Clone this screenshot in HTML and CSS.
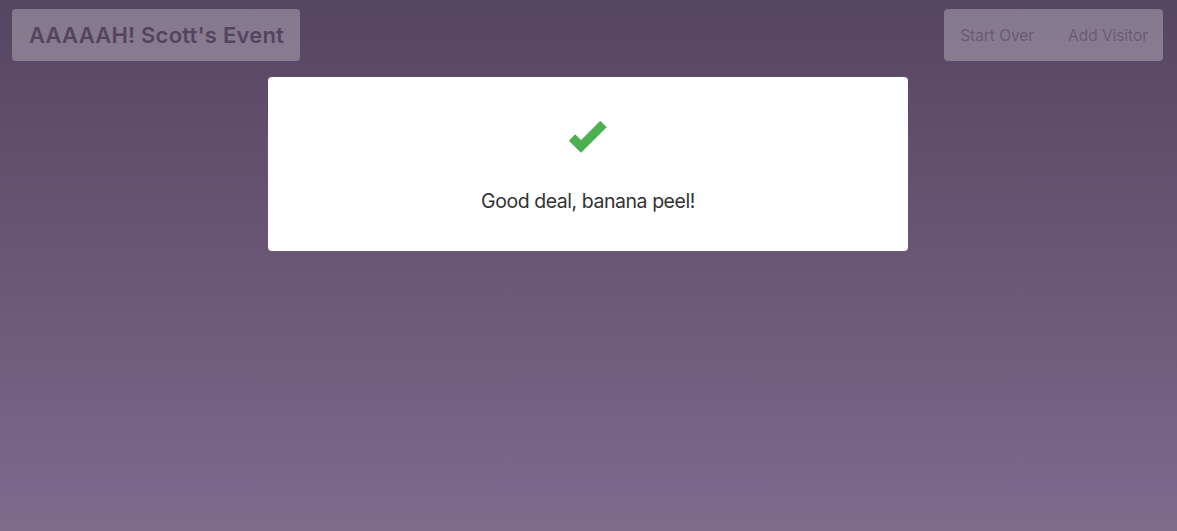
FILE: index.html
```html
<!DOCTYPE html>
<html lang="en">
<head>
<meta charset="utf-8">
<title>AAAAAH! Scott's Event</title>
<link rel="stylesheet" href="styles.css">
</head>
<body>
<div class="page">
  <header class="topbar">
    <div class="brand">AAAAAH! Scott's Event</div>
    <nav class="actions">
      <a class="action" href="#">Start Over</a>
      <a class="action" href="#">Add Visitor</a>
    </nav>
  </header>
  <main class="main">
    <section class="card">
      <svg class="check" viewBox="0 0 40 32" width="40" height="32" aria-hidden="true">
        <polyline points="4,16.5 13,25.5 35.5,3" fill="none" stroke="#4caf50" stroke-width="9" stroke-linecap="butt" stroke-linejoin="miter"/>
      </svg>
      <p class="message">Good deal, banana peel!</p>
    </section>
  </main>
</div>
</body>
</html>
```

FILE: styles.css
```css
html, body {
  margin: 0;
  padding: 0;
  height: 100%;
}

body {
  font-family: Inter, "Noto Sans", "Liberation Sans", sans-serif;
  background: linear-gradient(to bottom, #564561 0%, #6a5775 50%, #7a678b 92%, #7f6c8b 100%);
  min-height: 531px;
}

.page {
  padding: 9px 14px 0 12px;
}

.topbar {
  display: flex;
  justify-content: space-between;
  align-items: flex-start;
}

.brand {
  height: 52px;
  box-sizing: border-box;
  padding: 0 16px 1px 17px;
  display: flex;
  align-items: center;
  background: rgba(255, 255, 255, 0.28);
  border-radius: 4px;
  color: #55445f;
  font-size: 22px;
  font-weight: 600;
  letter-spacing: 0.22px;
}

.actions {
  height: 52px;
  box-sizing: border-box;
  display: flex;
  align-items: center;
  background: rgba(255, 255, 255, 0.28);
  border-radius: 4px;
  padding: 1px 15px 0 16px;
  gap: 34px;
}

.action {
  color: #6b5a77;
  text-decoration: none;
  font-size: 15.4px;
}

.main {
  display: flex;
  justify-content: center;
  padding-top: 16px;
  padding-left: 1px;
}

.card {
  width: 640px;
  height: 174px;
  box-sizing: border-box;
  background: #ffffff;
  border-radius: 4px;
  display: flex;
  flex-direction: column;
  align-items: center;
  padding-top: 44px;
}

.check {
  display: block;
}

.message {
  margin: 36px 0 0;
  color: #333333;
  font-size: 19.5px;
  letter-spacing: -0.45px;
  line-height: 24px;
}
```
